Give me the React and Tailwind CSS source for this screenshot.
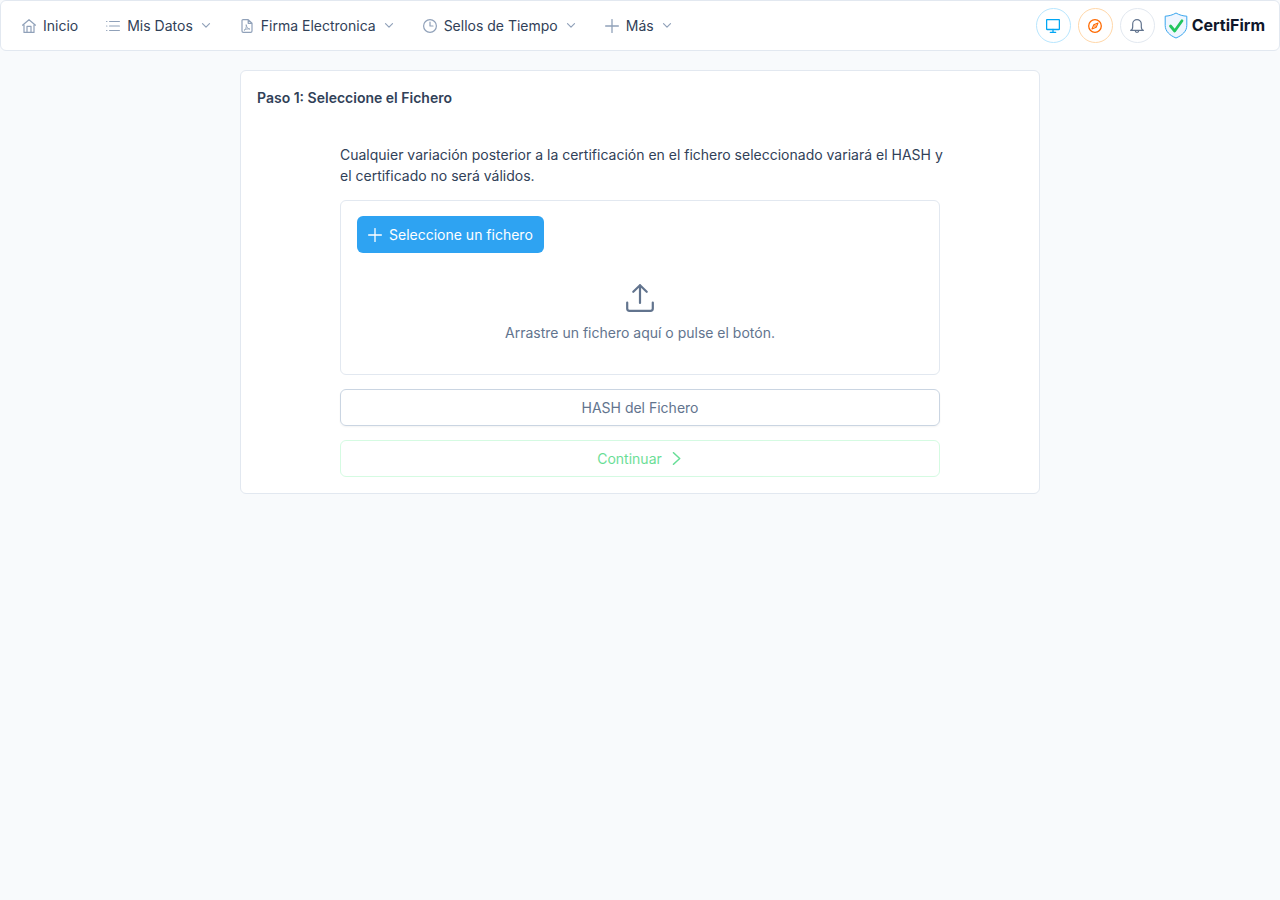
import React, { useState } from 'react';

const HomeIcon = () => (
  <svg className="w-[14px] h-[14px] shrink-0" viewBox="0 0 14 14" fill="none" stroke="currentColor" strokeWidth="1.2" strokeLinecap="round" strokeLinejoin="round" aria-hidden="true">
    <path d="M0.5 6.2 7 0.7l6.5 5.5M2 5v8.4h10V5M5 13.4V7.3h4v6.1" />
  </svg>
);

const ListIcon = () => (
  <svg className="w-[14px] h-[14px] shrink-0" viewBox="0 0 14 14" fill="none" stroke="currentColor" strokeWidth="1.2" strokeLinecap="round" aria-hidden="true">
    <path d="M3.6 2.5h9.8M3.6 7h9.8M3.6 11.5h9.8M0.6 2.5h0.3M0.6 7h0.3M0.6 11.5h0.3" />
  </svg>
);

const FilePdfIcon = () => (
  <svg className="w-[14px] h-[14px] shrink-0" viewBox="0 0 14 14" fill="none" stroke="currentColor" strokeWidth="1.2" strokeLinecap="round" strokeLinejoin="round" aria-hidden="true">
    <path d="M3 0.6h5.2l3.8 3.7v7.8a1.3 1.3 0 0 1-1.3 1.3H3.3A1.3 1.3 0 0 1 2 12.1V1.6a1 1 0 0 1 1-1zM8.2 0.8v3.5h3.600" />
    <path d="M6.2 6c.4 2.100 1.400 3.400 3.300 4M4.300 11.300c1.500-.8 2.200-2.800 2-5.200M4.600 10.900c1.300-.9 3-1.300 4.900-.9" strokeWidth="0.9" />
  </svg>
);

const ClockIcon = () => (
  <svg className="w-[14px] h-[14px] shrink-0" viewBox="0 0 14 14" fill="none" stroke="currentColor" strokeWidth="1.2" strokeLinecap="round" strokeLinejoin="round" aria-hidden="true">
    <circle cx="7" cy="7" r="6.4" />
    <path d="M7 3v4h3" />
  </svg>
);

const PlusIcon = () => (
  <svg className="w-[14px] h-[14px] shrink-0" viewBox="0 0 14 14" fill="none" stroke="currentColor" strokeWidth="1.3" strokeLinecap="round" aria-hidden="true">
    <path d="M7 0.6v12.8M0.6 7h12.8" />
  </svg>
);

const ChevronDown = () => (
  <svg className="w-3 h-3 shrink-0" viewBox="0 0 12 12" fill="none" stroke="currentColor" strokeWidth="1.2" strokeLinecap="round" strokeLinejoin="round" aria-hidden="true">
    <path d="M2.500 3.600 6 7.100l3.500-3.500" />
  </svg>
);

const DesktopIcon = () => (
  <svg className="w-[14px] h-[14px]" viewBox="0 0 14 14" fill="none" stroke="currentColor" strokeWidth="1.3" strokeLinecap="round" strokeLinejoin="round" aria-hidden="true">
    <rect x="0.600" y="0.600" width="12.800" height="9.900" rx="0.700" />
    <path d="M7 10.500v2.800M4.300 13.300h5.400" />
  </svg>
);

const CompassIcon = () => (
  <svg className="w-[14px] h-[14px]" viewBox="0 0 14 14" fill="none" stroke="currentColor" strokeWidth="1.300" strokeLinejoin="round" aria-hidden="true">
    <circle cx="7" cy="7" r="6.300" />
    <path d="M10 4 8.200 8.200 4 10l1.800-4.200z" strokeWidth="1.100" />
    <circle cx="7" cy="7" r="0.700" strokeWidth="0.600" />
  </svg>
);

const BellIcon = () => (
  <svg className="w-[14px] h-[14px]" viewBox="0 0 14 14" fill="none" stroke="currentColor" strokeWidth="1.200" strokeLinecap="round" strokeLinejoin="round" aria-hidden="true">
    <path d="M0.600 11.300c1.600-.4 2.100-1.700 2.100-3.600V4.900a4.300 4.300 0 0 1 8.600 0v2.800c0 1.900.5 3.200 2.100 3.600zM5.200 11.600a1.800 1.800 0 0 0 3.600 0" />
  </svg>
);

const UploadIcon = () => (
  <svg className="w-7 h-7" viewBox="0 0 28 28" fill="none" stroke="currentColor" strokeWidth="2.200" strokeLinecap="round" strokeLinejoin="round" aria-hidden="true">
    <path d="M14 19V1.200M7.300 7.800 14 1.200l6.700 6.600M1.200 18.500v6a2.300 2.300 0 0 0 2.300 2.300h21a2.300 2.300 0 0 0 2.300-2.300v-6" />
  </svg>
);

const ChevronRight = () => (
  <svg className="w-[14px] h-[14px]" viewBox="0 0 14 14" fill="none" stroke="currentColor" strokeWidth="1.500" strokeLinecap="round" strokeLinejoin="round" aria-hidden="true">
    <path d="M4.500 0.700 10.700 6.500 4.500 12.300" />
  </svg>
);

const ShieldLogo = () => (
  <svg className="w-6 h-[27px]" viewBox="0 0 24 27" fill="none" aria-hidden="true">
    <path d="M12 1c3.300 2 7 3 10.800 3.200v9.300c0 5.700-4.600 10-10.800 12.500C5.800 23.500 1.200 19.200 1.200 13.500V4.200C5 4 8.700 3 12 1z" fill="#eff6ff" stroke="#38a5ee" />
    <path d="m6.500 14 4.200 5L18 8.800" stroke="#22c55e" strokeWidth="2.800" strokeLinecap="round" strokeLinejoin="round" />
  </svg>
);

const menu = [
  { label: 'Inicio', icon: HomeIcon },
  { label: 'Mis Datos', icon: ListIcon, sub: true },
  { label: 'Firma Electronica', icon: FilePdfIcon, sub: true },
  { label: 'Sellos de Tiempo', icon: ClockIcon, sub: true },
  { label: 'Más', icon: PlusIcon, sub: true },
];

const Navbar = () => (
  <header className="flex items-center justify-between bg-white border border-slate-200 rounded-md px-[7px] py-[7px]">
    <nav>
      <ul className="flex items-center">
        {menu.map(({ label, icon: Icon, sub }) => (
          <li key={label}>
            <a href="#" className="flex items-center gap-[7px] px-[14px] py-[7px] leading-[21px] text-slate-700">
              <span className="text-slate-400"><Icon /></span>
              <span>{label}</span>
              {sub && <span className="text-slate-400"><ChevronDown /></span>}
            </a>
          </li>
        ))}
      </ul>
    </nav>
    <div className="flex items-center gap-[7px] pr-[7px]">
      <button type="button" aria-label="Escritorio" className="flex items-center justify-center w-[35px] h-[35px] rounded-full border border-sky-200 text-sky-500"><DesktopIcon /></button>
      <button type="button" aria-label="Explorar" className="flex items-center justify-center w-[35px] h-[35px] rounded-full border border-orange-200 text-orange-500"><CompassIcon /></button>
      <button type="button" aria-label="Notificaciones" className="flex items-center justify-center w-[35px] h-[35px] rounded-full border border-slate-200 text-slate-500"><BellIcon /></button>
      <a href="#" className="flex items-center gap-1 pl-0.5 text-base leading-[21px] font-bold text-slate-900">
        <ShieldLogo />
        <span>CertiFirm</span>
      </a>
    </div>
  </header>
);

export default function App() {
  const [hash] = useState('');

  return (
    <div className="min-h-screen bg-slate-50 text-slate-700 text-[14px] leading-[21px] font-['Inter',sans-serif]">
      <Navbar />
      <main className="px-4 pt-[19px]">
        <section className="max-w-[800px] mx-auto bg-white border border-slate-200 rounded-md p-4">
          <h1 className="font-semibold">Paso 1: Seleccione el Fichero</h1>
          <div className="max-w-[600px] mx-auto pt-9 flex flex-col gap-[14px]">
            <p className="-mr-2">
              Cualquier variación posterior a la certificación en el fichero seleccionado variará el HASH y el certificado no será válidos.
            </p>
            <div className="border border-slate-200 rounded-md px-4 pt-[15px] pb-[31px]">
              <button type="button" className="flex items-center gap-[7px] h-[37px] px-[11px] rounded-md bg-[#2ea3f2] text-white">
                <PlusIcon />
                Seleccione un fichero
              </button>
              <div className="flex flex-col items-center gap-[10px] pt-[31px] text-slate-500">
                <UploadIcon />
                <p>Arrastre un fichero aquí o pulse el botón.</p>
              </div>
            </div>
            <input
              type="text"
              value={hash}
              readOnly
              aria-label="HASH del Fichero"
              placeholder="HASH del Fichero"
              className="w-full h-[37px] border border-slate-300 rounded-md text-center shadow-xs placeholder:text-slate-500"
            />
            <button type="button" disabled className="flex items-center justify-center gap-[7px] h-[37px] border border-green-200 rounded-md text-green-500 opacity-60">
              Continuar
              <ChevronRight />
            </button>
          </div>
        </section>
      </main>
    </div>
  );
}
